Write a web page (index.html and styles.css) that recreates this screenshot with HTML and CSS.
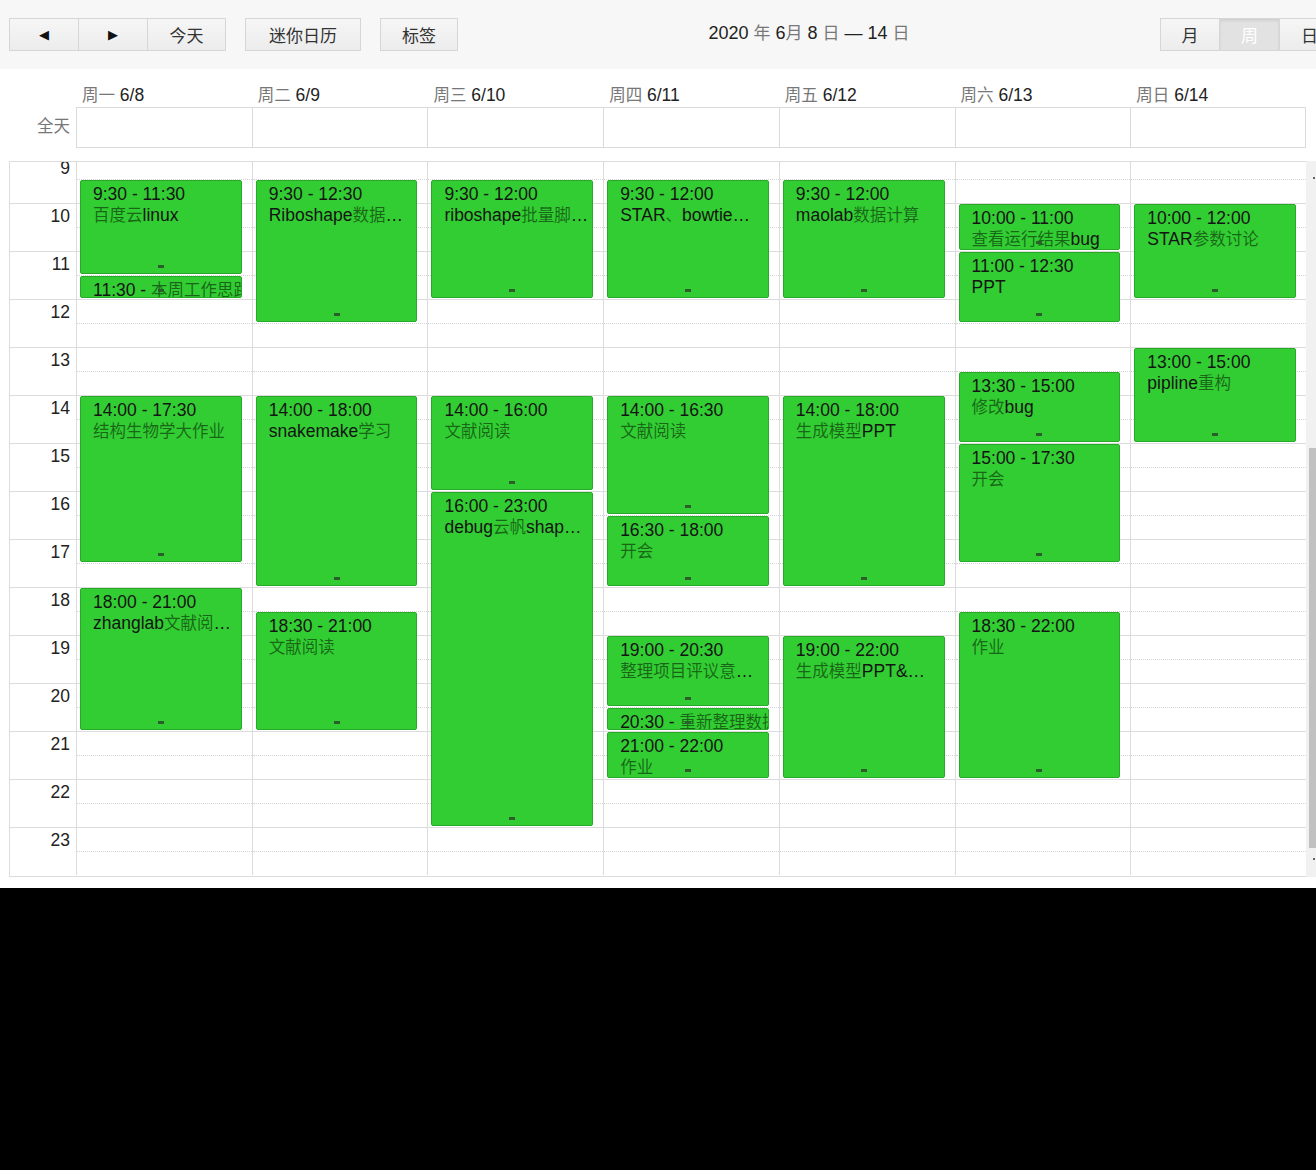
FILE: index.html
```html
<!DOCTYPE html>
<html lang="zh">
<head>
<meta charset="utf-8">
<title>周视图</title>
<link rel="stylesheet" href="styles.css">
</head>
<body>
<div class="page">
  <div class="toolbar">
    <div class="group">
      <div class="btn w70 arrow">&#9664;</div>
      <div class="btn w69 arrow">&#9654;</div>
      <div class="btn w78">今天</div>
    </div>
    <div class="btn w116 gap">迷你日历</div>
    <div class="btn w78 gap">标签</div>
    <div class="title">2020 <span class="zh">年</span> 6<span class="zh">月</span> 8 <span class="zh">日</span> — 14 <span class="zh">日</span></div>
    <div class="group">
      <div class="btn w60">月</div>
      <div class="btn w60 active">周</div>
      <div class="btn w60">日</div>
    </div>
  </div>

  <div class="dayhead">
    <div></div>
    <div class="dname"><span class="zh">周一</span> 6/8</div>
    <div class="dname"><span class="zh">周二</span> 6/9</div>
    <div class="dname"><span class="zh">周三</span> 6/10</div>
    <div class="dname"><span class="zh">周四</span> 6/11</div>
    <div class="dname"><span class="zh">周五</span> 6/12</div>
    <div class="dname"><span class="zh">周六</span> 6/13</div>
    <div class="dname"><span class="zh">周日</span> 6/14</div>
  </div>

  <div class="allday">
    <div class="alllabel">全天</div>
    <div class="acell"></div>
    <div class="acell"></div>
    <div class="acell"></div>
    <div class="acell"></div>
    <div class="acell"></div>
    <div class="acell"></div>
    <div class="acell last"></div>
  </div>

  <div class="main">
    <div class="cal">
      <div class="cols">
        <div class="tcol">
          <div class="tslot">9</div><div class="tslot">10</div><div class="tslot">11</div><div class="tslot">12</div><div class="tslot">13</div><div class="tslot">14</div><div class="tslot">15</div><div class="tslot">16</div><div class="tslot">17</div><div class="tslot">18</div><div class="tslot">19</div><div class="tslot">20</div><div class="tslot">21</div><div class="tslot">22</div><div class="tslot">23</div>
        </div>

        <!-- Monday -->
        <div class="dcol">
          <div class="slot"></div><div class="slot"></div><div class="slot"></div><div class="slot"></div><div class="slot"></div><div class="slot"></div><div class="slot"></div><div class="slot"></div><div class="slot"></div><div class="slot"></div><div class="slot"></div><div class="slot"></div><div class="slot"></div><div class="slot"></div><div class="slot"></div>
          <div class="ev" style="top:25px;height:94px"><div class="t">9:30 - 11:30</div><div class="n"><span class="zh">百度云</span>linux</div><span class="h"></span></div>
          <div class="ev" style="top:121px;height:22px"><div class="t">11:30 - <span class="zh">本周工作思路</span></div><span class="h"></span></div>
          <div class="ev" style="top:241px;height:166px"><div class="t">14:00 - 17:30</div><div class="n"><span class="zh">结构生物学大作业</span></div><span class="h"></span></div>
          <div class="ev" style="top:433px;height:142px"><div class="t">18:00 - 21:00</div><div class="n">zhanglab<span class="zh">文献阅</span>…</div><span class="h"></span></div>
        </div>

        <!-- Tuesday -->
        <div class="dcol">
          <div class="slot"></div><div class="slot"></div><div class="slot"></div><div class="slot"></div><div class="slot"></div><div class="slot"></div><div class="slot"></div><div class="slot"></div><div class="slot"></div><div class="slot"></div><div class="slot"></div><div class="slot"></div><div class="slot"></div><div class="slot"></div><div class="slot"></div>
          <div class="ev" style="top:25px;height:142px"><div class="t">9:30 - 12:30</div><div class="n">Riboshape<span class="zh">数据</span>…</div><span class="h"></span></div>
          <div class="ev" style="top:241px;height:190px"><div class="t">14:00 - 18:00</div><div class="n">snakemake<span class="zh">学习</span></div><span class="h"></span></div>
          <div class="ev" style="top:457px;height:118px"><div class="t">18:30 - 21:00</div><div class="n"><span class="zh">文献阅读</span></div><span class="h"></span></div>
        </div>

        <!-- Wednesday -->
        <div class="dcol">
          <div class="slot"></div><div class="slot"></div><div class="slot"></div><div class="slot"></div><div class="slot"></div><div class="slot"></div><div class="slot"></div><div class="slot"></div><div class="slot"></div><div class="slot"></div><div class="slot"></div><div class="slot"></div><div class="slot"></div><div class="slot"></div><div class="slot"></div>
          <div class="ev" style="top:25px;height:118px"><div class="t">9:30 - 12:00</div><div class="n">riboshape<span class="zh">批量脚</span>…</div><span class="h"></span></div>
          <div class="ev" style="top:241px;height:94px"><div class="t">14:00 - 16:00</div><div class="n"><span class="zh">文献阅读</span></div><span class="h"></span></div>
          <div class="ev" style="top:337px;height:334px"><div class="t">16:00 - 23:00</div><div class="n">debug<span class="zh">云帆</span>shap…</div><span class="h"></span></div>
        </div>

        <!-- Thursday -->
        <div class="dcol">
          <div class="slot"></div><div class="slot"></div><div class="slot"></div><div class="slot"></div><div class="slot"></div><div class="slot"></div><div class="slot"></div><div class="slot"></div><div class="slot"></div><div class="slot"></div><div class="slot"></div><div class="slot"></div><div class="slot"></div><div class="slot"></div><div class="slot"></div>
          <div class="ev" style="top:25px;height:118px"><div class="t">9:30 - 12:00</div><div class="n">STAR<span class="zh">、</span>bowtie…</div><span class="h"></span></div>
          <div class="ev" style="top:241px;height:118px"><div class="t">14:00 - 16:30</div><div class="n"><span class="zh">文献阅读</span></div><span class="h"></span></div>
          <div class="ev" style="top:361px;height:70px"><div class="t">16:30 - 18:00</div><div class="n"><span class="zh">开会</span></div><span class="h"></span></div>
          <div class="ev" style="top:481px;height:70px"><div class="t">19:00 - 20:30</div><div class="n"><span class="zh">整理项目评议意</span>…</div><span class="h"></span></div>
          <div class="ev" style="top:553px;height:22px"><div class="t">20:30 - <span class="zh">重新整理数据</span></div><span class="h"></span></div>
          <div class="ev" style="top:577px;height:46px"><div class="t">21:00 - 22:00</div><div class="n"><span class="zh">作业</span></div><span class="h"></span></div>
        </div>

        <!-- Friday -->
        <div class="dcol">
          <div class="slot"></div><div class="slot"></div><div class="slot"></div><div class="slot"></div><div class="slot"></div><div class="slot"></div><div class="slot"></div><div class="slot"></div><div class="slot"></div><div class="slot"></div><div class="slot"></div><div class="slot"></div><div class="slot"></div><div class="slot"></div><div class="slot"></div>
          <div class="ev" style="top:25px;height:118px"><div class="t">9:30 - 12:00</div><div class="n">maolab<span class="zh">数据计算</span></div><span class="h"></span></div>
          <div class="ev" style="top:241px;height:190px"><div class="t">14:00 - 18:00</div><div class="n"><span class="zh">生成模型</span>PPT</div><span class="h"></span></div>
          <div class="ev" style="top:481px;height:142px"><div class="t">19:00 - 22:00</div><div class="n"><span class="zh">生成模型</span>PPT&amp;…</div><span class="h"></span></div>
        </div>

        <!-- Saturday -->
        <div class="dcol">
          <div class="slot"></div><div class="slot"></div><div class="slot"></div><div class="slot"></div><div class="slot"></div><div class="slot"></div><div class="slot"></div><div class="slot"></div><div class="slot"></div><div class="slot"></div><div class="slot"></div><div class="slot"></div><div class="slot"></div><div class="slot"></div><div class="slot"></div>
          <div class="ev" style="top:49px;height:46px"><div class="t">10:00 - 11:00</div><div class="n"><span class="zh">查看运行结果</span>bug</div><span class="h"></span></div>
          <div class="ev" style="top:97px;height:70px"><div class="t">11:00 - 12:30</div><div class="n">PPT</div><span class="h"></span></div>
          <div class="ev" style="top:217px;height:70px"><div class="t">13:30 - 15:00</div><div class="n"><span class="zh">修改</span>bug</div><span class="h"></span></div>
          <div class="ev" style="top:289px;height:118px"><div class="t">15:00 - 17:30</div><div class="n"><span class="zh">开会</span></div><span class="h"></span></div>
          <div class="ev" style="top:457px;height:166px"><div class="t">18:30 - 22:00</div><div class="n"><span class="zh">作业</span></div><span class="h"></span></div>
        </div>

        <!-- Sunday -->
        <div class="dcol">
          <div class="slot"></div><div class="slot"></div><div class="slot"></div><div class="slot"></div><div class="slot"></div><div class="slot"></div><div class="slot"></div><div class="slot"></div><div class="slot"></div><div class="slot"></div><div class="slot"></div><div class="slot"></div><div class="slot"></div><div class="slot"></div><div class="slot"></div>
          <div class="ev" style="top:49px;height:94px"><div class="t">10:00 - 12:00</div><div class="n">STAR<span class="zh">参数讨论</span></div><span class="h"></span></div>
          <div class="ev" style="top:193px;height:94px"><div class="t">13:00 - 15:00</div><div class="n">pipline<span class="zh">重构</span></div><span class="h"></span></div>
        </div>
      </div>
    </div>
    <div class="vscroll">
      <div class="arr up"></div>
      <div class="thumb"></div>
      <div class="arr down"></div>
    </div>
  </div>
</div>
</body>
</html>
```

FILE: styles.css
```css
html {
  background: #000;
}
body {
  margin: 0;
  font-family: "Liberation Sans", Arial, "Noto Sans CJK SC", sans-serif;
  color: #222;
}
.page {
  width: 1316px;
  height: 888px;
  background: #fff;
  overflow: hidden;
}

/* toolbar */
.toolbar {
  width: 1340px;
  height: 69px;
  box-sizing: border-box;
  background: #f7f7f7;
  padding: 18px 0 0 9px;
  display: flex;
  align-items: flex-start;
  white-space: nowrap;
}
.group {
  display: flex;
}
.btn {
  height: 33px;
  box-sizing: border-box;
  border: 1px solid #d6d6d6;
  background: linear-gradient(#f6f6f6, #ececec);
  display: flex;
  align-items: center;
  justify-content: center;
  font-family: "Noto Sans CJK SC", sans-serif;
  font-size: 17px;
  color: #333;
}
.group .btn + .btn {
  border-left: none;
}
.btn.arrow {
  font-family: "DejaVu Sans", sans-serif;
  font-size: 13px;
  color: #111;
}
.btn.gap {
  margin-left: 19px;
}
.btn.active {
  background: #e2e2e2;
  box-shadow: inset 0 2px 3px rgba(0, 0, 0, 0.08);
  color: #fff;
}
.w60 { width: 60px; }
.w69 { width: 69px; }
.w70 { width: 70px; }
.w78 { width: 78px; }
.w116 { width: 116px; }

.title {
  flex: 1;
  text-align: center;
  font-size: 18px;
  line-height: 30px;
  color: #222;
}
.title .zh {
  font-size: 17px;
  color: #777;
}

/* day header */
.dayhead,
.allday {
  display: grid;
  grid-template-columns: 67px repeat(7, 1fr);
  width: 1297px;
  margin-left: 9px;
}
.dayhead {
  padding-top: 16px;
  height: 20px;
  margin-bottom: 2px;
}
.dname {
  padding-left: 6px;
  font-size: 17.5px;
  line-height: 20px;
  color: #222;
  white-space: nowrap;
}
.dname .zh {
  font-size: 16.5px;
  color: #777;
}
.allday {
  height: 41px;
}
.alllabel {
  text-align: right;
  padding-right: 6px;
  font-size: 16.5px;
  line-height: 38px;
  color: #777;
}
.acell {
  border: 1px solid #dadada;
  border-right: none;
}
.acell.last {
  border-right: 1px solid #dadada;
}

/* grid */
.main {
  display: flex;
  margin-top: 13px;
}
.cal {
  width: 1297px;
  height: 716px;
  margin-left: 9px;
  box-sizing: border-box;
  border: 1px solid #dcdcdc;
  border-right: none;
  overflow: hidden;
}
.cols {
  display: grid;
  grid-template-columns: 66px repeat(7, 1fr);
  margin-top: -7px;
}
.tslot {
  height: 48px;
  box-sizing: border-box;
  border-top: 1px solid #dcdcdc;
  text-align: right;
  padding: 3px 6px 0 0;
  font-size: 17.5px;
  line-height: 18px;
  color: #222;
}
.dcol {
  position: relative;
  border-left: 1px solid #dcdcdc;
}
.slot {
  height: 48px;
  box-sizing: border-box;
  border-top: 1px solid #dcdcdc;
}
.slot::after {
  content: "";
  display: block;
  margin-top: 23px;
  border-top: 1px dotted #d4d4d4;
}

/* events */
.ev {
  position: absolute;
  left: 3px;
  right: 10px;
  box-sizing: border-box;
  background: #32cd32;
  border: 1px solid #2aa82a;
  border-radius: 2px;
  padding: 3px 0 0 12px;
  overflow: hidden;
  font-size: 17.5px;
  line-height: 21px;
  color: #141414;
}
.ev .t,
.ev .n {
  white-space: nowrap;
  overflow: hidden;
  text-overflow: clip;
}
.ev .zh {
  font-size: 16.5px;
  color: rgba(0, 0, 0, 0.5);
}
.ev .h {
  position: absolute;
  left: 50%;
  bottom: 5px;
  width: 6px;
  height: 3px;
  margin-left: -3px;
  background: #2c5e2c;
}

/* scrollbar */
.vscroll {
  width: 10px;
  height: 716px;
  background: #f1f1f1;
  display: flex;
  flex-direction: column;
  align-items: flex-end;
}
.arr {
  width: 2px;
  height: 2px;
  background: #666;
  margin-right: 1px;
}
.arr.up {
  margin-top: 16px;
}
.thumb {
  width: 7px;
  height: 400px;
  background: #c1c1c1;
  margin-top: 269px;
}
.arr.down {
  margin-top: 10px;
}
```
